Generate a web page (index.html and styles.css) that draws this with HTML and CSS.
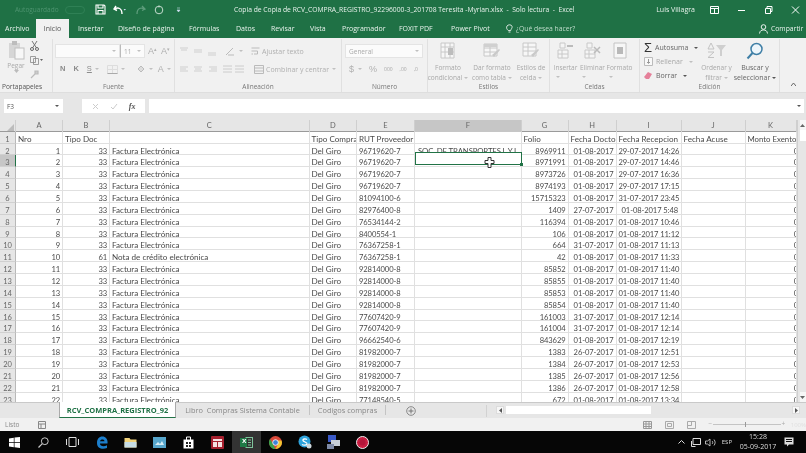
FILE: index.html
```html
<!DOCTYPE html>
<html lang="es">
<head>
<meta charset="utf-8">
<title>Excel</title>
<link rel="stylesheet" href="styles.css">
</head>
<body>
<div class="app">
  <header class="titlebar">
    <div class="qat">
      <span class="autosave">Autoguardado</span>
      <span class="toggle"></span>
      <svg class="qi save" width="11" height="11" viewBox="0 0 11 11"><path d="M1 1h8l1 1v8H1z M3 1v3h5V1 M3 10V6.500h5V10" fill="none" stroke="#fff" stroke-width="1.100"/></svg>
      <svg class="qi undo" width="13" height="10" viewBox="0 0 13 10"><path d="M3 1L1 4l3 1.500M1.500 4C5 2 9 3 9 9" fill="none" stroke="#fff" stroke-width="1.400"/><path d="M10.500 4h2.500l-1.250 1.500z" fill="#cde"/></svg>
      <svg class="qi redo" width="13" height="10" viewBox="0 0 13 10"><path d="M8 1l3 3-3 1.500M10.500 4C7 2 3 3 3 9" fill="none" stroke="#5d9c7b" stroke-width="1.300"/></svg>
      <svg class="qi circ" width="10" height="10" viewBox="0 0 10 10"><circle cx="5" cy="5" r="3.800" fill="none" stroke="#c5dccf" stroke-width="1"/><path d="M5 .5v2" stroke="#c5dccf"/></svg>
      <svg class="qi more" width="5" height="6" viewBox="0 0 5 6"><path d="M1 1h3M1 3h3l-1.500 2z" fill="#cde" stroke="#cde" stroke-width=".6"/></svg>
    </div>
    <div class="doctitle">Copia de Copia de RCV_COMPRA_REGISTRO_92296000-3_201708 Teresita -Myrian.xlsx  -  Solo lectura  -  Excel</div>
    <div class="winbar">
      <span class="user">Luis Villagra</span>
      <svg width="9" height="8" viewBox="0 0 9 8"><path d="M.5 .5h8v7h-8zM.5 2.500h8M4.500 2.500v5" fill="none" stroke="#fff"/></svg>
      <svg width="9" height="8" viewBox="0 0 9 8"><path d="M1 4.500h7" stroke="#fff"/></svg>
      <svg width="9" height="8" viewBox="0 0 9 8"><path d="M1.500 2.500h5v5h-5zM3 2.500V.5h5v5H6.500" fill="none" stroke="#fff"/></svg>
      <svg width="9" height="8" viewBox="0 0 9 8"><path d="M1 .5l7 7M8 .5l-7 7" stroke="#fff"/></svg>
    </div>
  </header>
  <nav class="tabs">
    <span class="tab t-arch">Archivo</span>
    <span class="tab t-act">Inicio</span>
    <span class="tab t-ins">Insertar</span>
    <span class="tab t-dis">Diseño de página</span>
    <span class="tab t-for">Fórmulas</span>
    <span class="tab t-dat">Datos</span>
    <span class="tab t-rev">Revisar</span>
    <span class="tab t-vis">Vista</span>
    <span class="tab t-pro">Programador</span>
    <span class="tab t-fox">FOXIT PDF</span>
    <span class="tab t-pow">Power Pivot</span>
    <span class="tab t-que">
      <svg width="7" height="9" viewBox="0 0 7 9"><path d="M2.300 6.500C.5 5 .2 3.500 1 2S5.500.3 6 2.200 5 5 4.700 6.500zM2.500 8h2" fill="none" stroke="#fff" stroke-width=".8"/></svg>
      ¿Qué desea hacer?
    </span>
    <span class="tab t-com">
      <svg width="9" height="10" viewBox="0 0 9 10"><circle cx="4.500" cy="3" r="2.300" fill="none" stroke="#fff" stroke-width=".9"/><path d="M.5 9.500c.5-3 2-3.500 4-3.500s3.500.5 4 3.500" fill="none" stroke="#fff" stroke-width=".9"/></svg>
      Compartir
    </span>
  </nav>
  <section class="ribbon">
    <div class="grp g-clip">
      <div class="body clip">
        <div class="paste">
          <svg width="17" height="19" viewBox="0 0 17 19"><rect x="1" y="2" width="11" height="15" fill="#d6d6d6"/><rect x="4" y="0" width="5" height="4" fill="#bdbdbd"/><rect x="7" y="7" width="9" height="11" fill="#f7f7f7" stroke="#c0c0c0"/></svg>
          <span>Pegar</span>
          <svg class="drop" width="5" height="3" viewBox="0 0 5 3"><path d="M0 0h5L2.500 3z" fill="#bbb"/></svg>
        </div>
        <div class="clipside">
          <svg width="9" height="10" viewBox="0 0 9 10"><path d="M2 0l4.500 7M7 0L2.500 7" stroke="#777" stroke-width="1"/><circle cx="2" cy="8" r="1.500" fill="none" stroke="#666"/><circle cx="7" cy="8" r="1.500" fill="none" stroke="#666"/></svg>
          <svg width="13" height="9" viewBox="0 0 13 9"><path d="M.5.500h5v6h-5zM3.500 2.500h5v6h-5z" fill="#f2f2f2" stroke="#888" stroke-width=".8"/><path d="M10 3h3l-1.500 2z" fill="#666"/></svg>
          <svg width="9" height="9" viewBox="0 0 9 9"><path d="M1 8l4-4M5 1h3v3H5z" stroke="#bbb" fill="#ccc" stroke-width="1.200"/></svg>
        </div>
      </div>
      <div class="lbl dark">Portapapeles</div>
    </div>
    <div class="grp g-font">
      <div class="body stack">
        <div class="line">
          <span class="box fname"><i class="caret"></i></span>
          <span class="box fsize">11<i class="caret"></i></span>
          <span class="gl big">A<sup>▴</sup></span>
          <span class="gl">A<sup>▾</sup></span>
        </div>
        <div class="line l2">
          <b class="gl">N</b><em class="gl">K</em><u class="gl">S</u><i class="caret"></i>
          <svg class="bord" width="11" height="9" viewBox="0 0 11 9"><path d="M.5.500h10v8H.5zM5.500.5v8M.5 4.500h10" fill="none" stroke="#ddd"/><path d="M.5 8.500h10" stroke="#aaa"/></svg><i class="caret"></i>
          <svg class="pad" width="10" height="9" viewBox="0 0 10 9"><path d="M2 4l3-3 3 3-3 3z" fill="#ddd" stroke="#bbb"/></svg><i class="caret"></i>
          <span class="gl fa">A</span><i class="caret"></i>
        </div>
      </div>
      <div class="lbl">Fuente</div>
    </div>
    <div class="grp g-align">
      <div class="body stack">
        <div class="line">
          <svg width="40" height="9" viewBox="0 0 40 9"><path d="M1 1h8M2 3h6M15 3h8M15 5h8M29 6h8M29 8h8" stroke="#cfcfcf"/></svg>
          <svg class="orient" width="11" height="9" viewBox="0 0 11 9"><path d="M1 8l7-7M3 8h6" stroke="#bbb"/></svg><i class="caret"></i>
          <svg class="wrap" width="9" height="9" viewBox="0 0 9 9"><path d="M.5 1h8M.5 4h6v3H3M.5 7H2" fill="none" stroke="#bbb"/></svg>
          <span class="rt">Ajustar texto</span>
        </div>
        <div class="line l2">
          <svg width="40" height="7" viewBox="0 0 40 7"><path d="M1 1h8M1 3h6M1 5h8M15 1h8M16 3h6M15 5h8M30 1h8M32 3h6M30 5h8" stroke="#cfcfcf"/></svg>
          <svg class="ind" width="24" height="8" viewBox="0 0 24 8"><path d="M1 1h9M1 4h9M1 7h9M13 1h9M13 4h9M13 7h9" stroke="#ccc"/></svg>
          <svg class="wrap" width="10" height="9" viewBox="0 0 10 9"><path d="M.5.500h9v8h-9zM.5 3h9M.5 6h9" fill="none" stroke="#bbb"/></svg>
          <span class="rt">Combinar y centrar</span><i class="caret"></i>
        </div>
      </div>
      <div class="lbl">Alineación</div>
    </div>
    <div class="grp g-num">
      <div class="body stack">
        <div class="line"><span class="box fgen">General<i class="caret"></i></span></div>
        <div class="line l2 numl">
          <span class="gl">$</span><i class="caret"></i><span class="gl">%</span><span class="tiny">000</span><span class="tiny">,00</span><span class="tiny">,0</span>
        </div>
      </div>
      <div class="lbl">Número</div>
    </div>
    <div class="grp g-est">
      <div class="body bigs">
        <div class="bigb w-a">
          <svg width="16" height="17" viewBox="0 0 16 17"><path d="M1 1h13v15H1zM5 1v15M10 1v15M1 5h13M1 10h13" fill="#f7f7f7" stroke="#c8c8c8"/><path d="M8 6h5v7H8z" fill="#bdbdbd"/></svg>
          <span>Formato condicional<i class="caret"></i></span>
        </div>
        <div class="bigb w-b">
          <svg width="18" height="17" viewBox="0 0 18 17"><path d="M1 2h13v12H1zM1 6h13M1 10h13M7 2v12" fill="#f7f7f7" stroke="#c8c8c8"/><path d="M1 2h13v3H1z" fill="#d0d0d0"/><path d="M9 13l7-6 1 1-6 7z" fill="#c9c9c9"/></svg>
          <span>Dar formato como tabla<i class="caret"></i></span>
        </div>
        <div class="bigb w-c">
          <svg width="18" height="17" viewBox="0 0 18 17"><path d="M1 1h13v13H1zM1 5h13M1 9h13M6 1v13" fill="#f7f7f7" stroke="#c8c8c8"/><path d="M9 13l7-6 1 1-6 7z" fill="#c9c9c9"/></svg>
          <span>Estilos de celda<i class="caret"></i></span>
        </div>
      </div>
      <div class="lbl">Estilos</div>
    </div>
    <div class="grp g-cel">
      <div class="body bigs">
        <div class="bigb w-d">
          <svg width="17" height="17" viewBox="0 0 17 17"><path d="M1 8h10v8H1zM5 8v8M1 12h10M3 1h5v5H3z" fill="#f5f5f5" stroke="#c8c8c8"/><path d="M10 4h6" stroke="#bbb" stroke-width="2"/></svg>
          <span>Insertar<i class="caret blk"></i></span>
        </div>
        <div class="bigb w-d">
          <svg width="17" height="17" viewBox="0 0 17 17"><path d="M1 8h10v8H1zM5 8v8M1 12h10M3 1h5v5H3z" fill="#f5f5f5" stroke="#c8c8c8"/><path d="M10 5l6 6M16 5l-6 6" stroke="#bbb" stroke-width="1.500"/></svg>
          <span>Eliminar<i class="caret blk"></i></span>
        </div>
        <div class="bigb w-d">
          <svg width="14" height="17" viewBox="0 0 14 17"><path d="M1 1h12v15H1z" fill="#f7f7f7" stroke="#c4c4c4"/><path d="M4 5h6v7H4z" fill="#b9b9b9"/></svg>
          <span>Formato<i class="caret blk"></i></span>
        </div>
      </div>
      <div class="lbl">Celdas</div>
    </div>
    <div class="grp g-edi">
      <div class="body edi">
        <div class="edicol">
          <div class="eli strong"><span class="sigma">Σ</span>Autosuma<i class="caret dk"></i></div>
          <div class="eli"><svg width="9" height="9" viewBox="0 0 9 9"><path d="M.5.500h8v8h-8z" fill="#f8f8f8" stroke="#bbb"/><path d="M4.500 2v4M3 5l1.500 1.500L6 5" fill="none" stroke="#999"/></svg>Rellenar<i class="caret"></i></div>
          <div class="eli strong"><svg width="9" height="7" viewBox="0 0 9 7"><path d="M0 5l4-5 4 2-3 5H2z" fill="#e5809a"/></svg>Borrar<i class="caret dk"></i></div>
        </div>
        <div class="bigb w-e">
          <svg width="20" height="17" viewBox="0 0 20 17"><path d="M4 1L1 7h6zM1 10h6L1 15.500h6" fill="none" stroke="#c3c3c3"/><path d="M9 3h10l-4 5v6h-2V8z" fill="#cfcfcf"/></svg>
          <span>Ordenar y filtrar<i class="caret"></i></span>
        </div>
        <div class="bigb w-f strong">
          <svg width="18" height="18" viewBox="0 0 18 18"><circle cx="10.500" cy="7" r="5.500" fill="#eef6fb" stroke="#3f7fa6" stroke-width="1.500"/><path d="M6.500 11L1.500 16.500" stroke="#3f7fa6" stroke-width="2"/></svg>
          <span>Buscar y seleccionar<i class="caret dk"></i></span>
        </div>
      </div>
      <div class="lbl">Edición</div>
    </div>
    <div class="collapse"><svg width="5" height="3" viewBox="0 0 5 3"><path d="M0 3l2.500-3L5 3" fill="none" stroke="#666"/></svg></div>
  </section>
  <section class="fbar">
    <div class="namebox">F3<i class="caret dk"></i></div>
    <div class="fbtn">
      <svg width="7" height="7" viewBox="0 0 7 7"><path d="M1 1l5 5M6 1L1 6" stroke="#ccc"/></svg>
      <svg width="8" height="7" viewBox="0 0 8 7"><path d="M1 4l2 2 4-5" fill="none" stroke="#ccc"/></svg>
      <span class="fx">fx</span>
    </div>
    <div class="finput"><i class="caret dk"></i></div>
  </section>
  <section class="sheet">
    <div class="head">
      <span class="corner"><svg width="7" height="7" viewBox="0 0 7 7"><path d="M7 0v7H0z" fill="#bcbcbc"/></svg></span>
      <span>A</span><span>B</span><span>C</span><span>D</span><span>E</span><span class="sel">F</span><span>G</span><span>H</span><span>I</span><span>J</span><span>K</span>
    </div>
    <div class="row first"><span>1</span><span class="tl">Nro</span><span class="tl">Tipo Doc</span><span></span><span>Tipo Compra</span><span>RUT Proveedor</span><span></span><span class="tl">Folio</span><span class="tl">Fecha Docto</span><span class="tl">Fecha Recepcion</span><span class="tl">Fecha Acuse</span><span class="tl">Monto Exento</span></div>
    <div class="row"><span>2</span><span>1</span><span>33</span><span>Factura Electrónica</span><span>Del Giro</span><span>96719620-7</span><span>SOC. DE TRANSPORTES L Y L</span><span>8969911</span><span>01-08-2017</span><span>29-07-2017 14:26</span><span></span><span class="k"><b>0</b></span></div>
    <div class="row cur"><span>3</span><span>2</span><span>33</span><span>Factura Electrónica</span><span>Del Giro</span><span>96719620-7</span><span></span><span>8971991</span><span>01-08-2017</span><span>29-07-2017 14:46</span><span></span><span class="k"><b>0</b></span></div>
    <div class="row"><span>4</span><span>3</span><span>33</span><span>Factura Electrónica</span><span>Del Giro</span><span>96719620-7</span><span></span><span>8973726</span><span>01-08-2017</span><span>29-07-2017 16:36</span><span></span><span class="k"><b>0</b></span></div>
    <div class="row"><span>5</span><span>4</span><span>33</span><span>Factura Electrónica</span><span>Del Giro</span><span>96719620-7</span><span></span><span>8974193</span><span>01-08-2017</span><span>29-07-2017 17:15</span><span></span><span class="k"><b>0</b></span></div>
    <div class="row"><span>6</span><span>5</span><span>33</span><span>Factura Electrónica</span><span>Del Giro</span><span>81094100-6</span><span></span><span>15715323</span><span>01-08-2017</span><span>31-07-2017 23:45</span><span></span><span class="k"><b>0</b></span></div>
    <div class="row"><span>7</span><span>6</span><span>33</span><span>Factura Electrónica</span><span>Del Giro</span><span>82976400-8</span><span></span><span>1409</span><span>27-07-2017</span><span>01-08-2017 5:48</span><span></span><span class="k"><b>0</b></span></div>
    <div class="row"><span>8</span><span>7</span><span>33</span><span>Factura Electrónica</span><span>Del Giro</span><span>76534144-2</span><span></span><span>116394</span><span>01-08-2017</span><span>01-08-2017 10:46</span><span></span><span class="k"><b>0</b></span></div>
    <div class="row"><span>9</span><span>8</span><span>33</span><span>Factura Electrónica</span><span>Del Giro</span><span>8400554-1</span><span></span><span>106</span><span>01-08-2017</span><span>01-08-2017 11:12</span><span></span><span class="k"><b>0</b></span></div>
    <div class="row"><span>10</span><span>9</span><span>33</span><span>Factura Electrónica</span><span>Del Giro</span><span>76367258-1</span><span></span><span>664</span><span>31-07-2017</span><span>01-08-2017 11:13</span><span></span><span class="k"><b>0</b></span></div>
    <div class="row"><span>11</span><span>10</span><span>61</span><span>Nota de crédito electrónica</span><span>Del Giro</span><span>76367258-1</span><span></span><span>42</span><span>01-08-2017</span><span>01-08-2017 11:33</span><span></span><span class="k"><b>0</b></span></div>
    <div class="row"><span>12</span><span>11</span><span>33</span><span>Factura Electrónica</span><span>Del Giro</span><span>92814000-8</span><span></span><span>85852</span><span>01-08-2017</span><span>01-08-2017 11:40</span><span></span><span class="k"><b>0</b></span></div>
    <div class="row"><span>13</span><span>12</span><span>33</span><span>Factura Electrónica</span><span>Del Giro</span><span>92814000-8</span><span></span><span>85855</span><span>01-08-2017</span><span>01-08-2017 11:40</span><span></span><span class="k"><b>0</b></span></div>
    <div class="row"><span>14</span><span>13</span><span>33</span><span>Factura Electrónica</span><span>Del Giro</span><span>92814000-8</span><span></span><span>85853</span><span>01-08-2017</span><span>01-08-2017 11:40</span><span></span><span class="k"><b>0</b></span></div>
    <div class="row"><span>15</span><span>14</span><span>33</span><span>Factura Electrónica</span><span>Del Giro</span><span>92814000-8</span><span></span><span>85854</span><span>01-08-2017</span><span>01-08-2017 11:40</span><span></span><span class="k"><b>0</b></span></div>
    <div class="row"><span>16</span><span>15</span><span>33</span><span>Factura Electrónica</span><span>Del Giro</span><span>77607420-9</span><span></span><span>161003</span><span>31-07-2017</span><span>01-08-2017 12:14</span><span></span><span class="k"><b>0</b></span></div>
    <div class="row"><span>17</span><span>16</span><span>33</span><span>Factura Electrónica</span><span>Del Giro</span><span>77607420-9</span><span></span><span>161004</span><span>31-07-2017</span><span>01-08-2017 12:14</span><span></span><span class="k"><b>0</b></span></div>
    <div class="row"><span>18</span><span>17</span><span>33</span><span>Factura Electrónica</span><span>Del Giro</span><span>96662540-6</span><span></span><span>843629</span><span>01-08-2017</span><span>01-08-2017 12:19</span><span></span><span class="k"><b>0</b></span></div>
    <div class="row"><span>19</span><span>18</span><span>33</span><span>Factura Electrónica</span><span>Del Giro</span><span>81982000-7</span><span></span><span>1383</span><span>26-07-2017</span><span>01-08-2017 12:51</span><span></span><span class="k"><b>0</b></span></div>
    <div class="row"><span>20</span><span>19</span><span>33</span><span>Factura Electrónica</span><span>Del Giro</span><span>81982000-7</span><span></span><span>1384</span><span>26-07-2017</span><span>01-08-2017 12:53</span><span></span><span class="k"><b>0</b></span></div>
    <div class="row"><span>21</span><span>20</span><span>33</span><span>Factura Electrónica</span><span>Del Giro</span><span>81982000-7</span><span></span><span>1385</span><span>26-07-2017</span><span>01-08-2017 12:56</span><span></span><span class="k"><b>0</b></span></div>
    <div class="row"><span>22</span><span>21</span><span>33</span><span>Factura Electrónica</span><span>Del Giro</span><span>81982000-7</span><span></span><span>1386</span><span>26-07-2017</span><span>01-08-2017 12:58</span><span></span><span class="k"><b>0</b></span></div>
    <div class="row"><span>23</span><span>22</span><span>33</span><span>Factura Electrónica</span><span>Del Giro</span><span>77148540-5</span><span></span><span>672</span><span>01-08-2017</span><span>01-08-2017 13:34</span><span></span><span class="k"><b>0</b></span></div>
    <div class="selection"><i class="handle"></i>
      <svg class="pointer" width="11" height="11" viewBox="0 0 11 11"><path d="M4 .5h3v3h3v3H7v4H4v-4H1v-3h3z" fill="#fff" stroke="#333" stroke-width="1"/></svg>
    </div>
    <div class="vscroll">
      <span class="sbtn"><svg width="5" height="3" viewBox="0 0 5 3"><path d="M0 3l2.500-3L5 3z" fill="#666"/></svg></span>
      <span class="sthumb"></span>
      <span class="strack"></span>
      <span class="sbtn"><svg width="5" height="3" viewBox="0 0 5 3"><path d="M0 0l2.500 3L5 0z" fill="#666"/></svg></span>
    </div>
  </section>
  <section class="sheettabs">
    <div class="stnav"><i></i><i></i></div>
    <div class="stab active">RCV_COMPRA_REGISTRO_92</div>
    <div class="stab s2">Libro  Compras Sistema Contable</div>
    <div class="stab s3">Codigos compras</div>
    <svg class="plus" width="10" height="10" viewBox="0 0 10 10"><circle cx="5" cy="5" r="4.300" fill="none" stroke="#888"/><path d="M5 2.500v5M2.500 5h5" stroke="#777"/></svg>
    <div class="hscroll">
      <span class="hbtn"><svg width="3" height="5" viewBox="0 0 3 5"><path d="M3 0L0 2.500 3 5z" fill="#555"/></svg></span>
      <span class="hthumb"></span>
      <span class="htrack"></span>
      <span class="hbtn"><svg width="3" height="5" viewBox="0 0 3 5"><path d="M0 0l3 2.500L0 5z" fill="#555"/></svg></span>
    </div>
  </section>
  <footer class="status">
    <span class="listo">Listo</span>
    <svg class="macro" width="8" height="8" viewBox="0 0 8 8"><path d="M.5.500h7v7h-7zM.5 3h7M3 3v4.500" fill="none" stroke="#888"/></svg>
    <div class="views">
      <svg width="9" height="8" viewBox="0 0 9 8"><path d="M.5.500h8v7h-8zM.5 3h8M.5 5.500h8M3 .5v7M6 .5v7" fill="none" stroke="#999"/></svg>
      <svg width="9" height="8" viewBox="0 0 9 8"><path d="M.5.500h8v7h-8zM2.500 2.500h4v3h-4z" fill="none" stroke="#aaa"/></svg>
      <svg width="9" height="8" viewBox="0 0 9 8"><path d="M.5.500h8v7h-8zM4.500.5v4h-4" fill="none" stroke="#aaa"/></svg>
    </div>
    <div class="zoomer"><i class="zm">−</i><span class="ztrack"><i class="zthumb"></i></span><i class="zm">+</i></div>
    <span class="zpct">100%</span>
  </footer>
  <footer class="taskbar">
    <div class="tasks">
      <svg width="11" height="11" viewBox="0 0 11 11"><path d="M0 1.500l4.800-.8v4.300H0zM5.500.6L11 0v5H5.500zM0 5.800h4.800v4.400L0 9.500zM5.500 5.800H11V11l-5.500-.8z" fill="#fff"/></svg>
      <svg width="11" height="11" viewBox="0 0 11 11"><circle cx="6.800" cy="4.200" r="3.400" fill="none" stroke="#ccc"/><path d="M4.300 6.700L.5 10.500" stroke="#ccc" stroke-width="1.200"/></svg>
      <svg width="13" height="10" viewBox="0 0 13 10"><path d="M3 .5h7v9H3zM.5 2v6M12.500 2v6" fill="none" stroke="#ddd"/></svg>
      <svg width="12" height="13" viewBox="0 0 12 13"><path d="M1 7C1 3 3 .5 6.500.5S12 3.500 11.500 7.500H4c0 3 4 3.500 7 1.800V12c-4 1.500-10 1-10-5zM4 5.200h4.500C8.500 3.200 4.500 3 4 5.200z" fill="#1d7fcc"/></svg>
      <svg width="13" height="11" viewBox="0 0 13 11"><path d="M.5 1h5l1 1.500h6V10.500H.5z" fill="#f2d47c"/><path d="M.5 5h12v5.500H.5z" fill="#c7dde6"/></svg>
      <svg width="13" height="11" viewBox="0 0 13 11"><rect width="13" height="11" fill="#57a6cc"/><path d="M2 8l3-3 2 2 2-3 2 4z" fill="#d6edf6"/></svg>
      <svg width="11" height="13" viewBox="0 0 11 13"><path d="M.5 3.500h10v9H.5z" fill="#fff"/><path d="M3.500 4V1h4v3" fill="none" stroke="#fff"/><path d="M3 6h2v2H3zM6 6h2v2H6zM3 9h2v2H3zM6 9h2v2H6z" fill="#222"/></svg>
      <svg width="13" height="13" viewBox="0 0 13 13"><rect width="13" height="13" rx="1" fill="#a5202e"/><path d="M2 3h9v2H2zM2 6h4v5H2zM7 6h4v5H7z" fill="#f5e2e2"/></svg>
      <span class="tbx"><svg width="13" height="11" viewBox="0 0 13 11"><rect x="6" y=".5" width="6.500" height="10" fill="none" stroke="#7fc39b"/><path d="M8 3h3M8 5.500h3M8 8h3" stroke="#7fc39b"/><rect y="1" width="7" height="9" fill="#1e7a46"/></svg><b class="xl">x</b></span>
      <svg width="13" height="13" viewBox="0 0 13 13"><circle cx="6.500" cy="6.500" r="6.500" fill="#d9493a"/><path d="M6.500 13A6.500 6.500 0 0 1 1 3l3 5z" fill="#3b9f4b"/><path d="M13 6.500A6.500 6.500 0 0 1 6.500 13L9 8l-.5-3.500h4z" fill="#f2c531"/><circle cx="6.500" cy="6.500" r="2.800" fill="#3c82d8" stroke="#fff" stroke-width=".8"/></svg>
      <svg width="14" height="14" viewBox="0 0 14 14"><circle cx="6.500" cy="6.500" r="6" fill="#2ea3dc"/><path d="M9 4.500C7.500 3.500 4.500 3.800 5 5.500S9.500 7 9 9c-.5 1.500-3.500 1.500-5 .5" fill="none" stroke="#fff" stroke-width="1.300"/><circle cx="11" cy="11" r="2.500" fill="#cfd8dc"/></svg>
      <svg width="13" height="14" viewBox="0 0 13 14"><rect x="1" y="0" width="8" height="7" fill="#3a59c7"/><rect x="4" y="5" width="9" height="6" fill="#c7cfd8"/><rect x="0" y="9" width="7" height="5" fill="#7e8aa6"/></svg>
      <svg width="13" height="13" viewBox="0 0 13 13"><circle cx="6.500" cy="6.500" r="6" fill="#c91f43" stroke="#eee" stroke-width="1"/><circle cx="6.500" cy="6.500" r="3" fill="#b3163a"/></svg>
    </div>
    <div class="tray">
      <svg width="7" height="4" viewBox="0 0 7 4"><path d="M.5 3.500l3-3 3 3" fill="none" stroke="#ddd"/></svg>
      <svg width="10" height="9" viewBox="0 0 10 9"><path d="M2 .5h7.500v6H2zM.5 3v5.500h4" fill="none" stroke="#ddd"/></svg>
      <svg class="vol" width="11" height="9" viewBox="0 0 11 9"><path d="M.5 3h2L5 1v7L2.500 6h-2zM7 3c1 1 1 2 0 3M9 1.500c1.500 2 1.500 4 0 6" fill="none" stroke="#ddd" stroke-width=".8"/></svg>
      <span class="esp">ESP</span>
      <span class="clock"><span>15:28</span><span>05-09-2017</span></span>
      <svg width="10" height="10" viewBox="0 0 10 10"><path d="M.5.500h9v7H5L3 9.500v-2H.5z" fill="#ddd"/><path d="M2 2.500h6M2 4.500h6" stroke="#111"/></svg>
    </div>
  </footer>
</div>
</body>
</html>
```

FILE: styles.css
```css
* { box-sizing: border-box; }
html, body { margin: 0; padding: 0; background: #000; }
.app {
  width: 806px; height: 453px; overflow: hidden; display: flex; flex-direction: column;
  font-family: "Open Sans", sans-serif; background: #fff; filter: blur(.45px);
}
i, em { font-style: normal; }
svg { display: block; flex: none; }

.caret { display: inline-block; width: 0; height: 0; border: 2px solid transparent; border-top: 2.500px solid #c0c0c0; border-bottom: 0; margin-left: 3px; vertical-align: middle; flex: none; }
.caret.dk { border-top-color: #555; }
.caret.blk { display: block; margin: 3px auto 0; }

/* title bar */
.titlebar { height: 19px; flex: none; background: #1f7145; color: #e8f2ec; display: flex; align-items: center; font-size: 7px; position: relative; }
.qat { display: flex; align-items: center; width: 234px; flex: none; }
.autosave { margin-left: 15px; width: 45px; color: #4e9470; font-size: 6.500px; white-space: nowrap; }
.toggle { width: 20px; height: 8px; border: 1px solid #2f8055; border-radius: 4px; margin-left: 5px; }
.qi.save { margin-left: 10px; }
.qi.undo { margin-left: 7px; }
.qi.redo { margin-left: 8px; }
.qi.circ { margin-left: 7px; }
.qi.more { margin-left: 12px; }
.doctitle { width: 400px; flex: none; white-space: pre; font-size: 6.750px; }
.winbar { flex: 1; display: flex; align-items: center; justify-content: flex-end; padding-right: 6px; }
.user { margin-right: 15px; white-space: nowrap; }
.winbar svg { margin-right: 18px; }
.winbar svg:last-child { margin-right: 0; }

/* ribbon tabs */
.tabs { height: 19px; flex: none; background: #1f7145; color: #e8f2ec; display: flex; align-items: center; font-size: 7px; padding-left: 5px; position: relative; }
.tab { white-space: nowrap; display: flex; align-items: center; }
.t-arch { width: 31px; }
.t-act { width: 33px; height: 19px; align-self: flex-end; background: #f1f1f1; color: #555; justify-content: center; margin-right: 9px; }
.t-ins { width: 40px; }
.t-dis { width: 71px; }
.t-for { width: 47px; }
.t-dat { width: 35px; }
.t-rev { width: 39px; }
.t-vis { width: 32px; }
.t-pro { width: 57px; }
.t-fox { width: 52px; }
.t-pow { width: 52px; }
.t-que { width: 253px; gap: 3px; color: #bfdccb; font-size: 6.800px; margin-left: 3px; }
.t-com { gap: 3px; font-size: 6.800px; }

/* ribbon */
.ribbon { height: 55px; flex: none; background: #f1f1f1; display: flex; color: #a8a8a8; font-size: 6.500px; border-bottom: 1px solid #dedede; }
.grp { display: flex; flex-direction: column; border-right: 1px solid #e0e0e0; flex: none; margin: 1px 0 0; }
.g-clip { width: 53px; } .g-font { width: 122px; } .g-align { width: 167px; } .g-num { width: 86px; }
.g-est { width: 122px; } .g-cel { width: 90px; } .g-edi { width: 140px; }
.body { flex: 1; min-height: 0; }
.lbl { height: 11px; line-height: 11px; text-align: center; color: #777; font-size: 6.500px; white-space: nowrap; }
.lbl.dark { color: #555; text-align: left; padding-left: 2px; }
.clip { display: flex; padding: 2px 0 0 7px; }
.paste { width: 18px; display: flex; flex-direction: column; align-items: center; color: #aaa; }
.paste span { margin-top: 2px; line-height: 8px; }
.clipside { display: flex; flex-direction: column; align-items: flex-start; gap: 5px; margin-left: 5px; }
.stack { display: flex; flex-direction: column; padding-top: 5px; padding-left: 2px; }
.line { display: flex; align-items: center; height: 14px; white-space: nowrap; }
.line.l2 { margin-top: 4px; }
.box { background: #fbfbfb; border: 1px solid #e4e4e4; height: 14px; display: flex; align-items: center; justify-content: flex-end; padding: 0 3px; }
.fname { width: 65px; }
.fsize { width: 25px; justify-content: space-between; border-left-color: #bbb; color: #aaa; }
.fgen { width: 78px; justify-content: space-between; color: #aaa; margin-left: 1px; }
.gl { font-size: 9px; color: #b0b0b0; margin-left: 4px; line-height: 1; font-family: "Liberation Sans", sans-serif; }
.gl sup { font-size: 5px; vertical-align: top; }
.gl.big { margin-left: 3px; }
b.gl, em.gl, u.gl { font-size: 7.500px; color: #8c8c8c; margin-left: 8px; }
b.gl { margin-left: 5px; }
em.gl { font-weight: 700; }
.bord { margin-left: 8px; } .pad { margin-left: 11px; } .gl.fa { margin-left: 5px; }
.g-align .stack { padding-left: 4px; }
.orient { margin-left: 6px; }
.wrap { margin-left: 8px; margin-right: 2px; }
.rt { color: #b0b0b0; font-size: 7px; }
.ind { margin-left: 3px; }
.numl { padding-left: 5px; gap: 1px; }
.numl .gl { margin-left: 0; }
.numl .caret { margin: 0 6px 0 3px; }
.tiny { font-size: 5px; margin-left: 6px; }
.bigs { display: flex; padding: 3px 0 0 0; }
.bigb { display: flex; flex-direction: column; align-items: center; text-align: center; line-height: 10px; flex: none; }
.bigb span { margin-top: 4px; }
.bigb .caret { margin-left: 2px; }
.w-a { width: 44px; margin-left: -2px; } .w-b { width: 44px; } .w-c { width: 34px; }
.w-d { width: 27px; }
.g-cel .bigs { padding-left: 2px; }
.edi { display: flex; padding: 3px 0 0 4px; }
.edicol { width: 57px; flex: none; display: flex; flex-direction: column; gap: 3px; font-size: 7px; }
.eli { display: flex; align-items: center; gap: 3px; height: 11px; white-space: nowrap; }
.strong { color: #666; }
.sigma { font-size: 13px; color: #333; font-family: "Liberation Sans", sans-serif; line-height: 1; }
.w-e { width: 31px; }
.w-f { width: 46px; font-size: 7px; }
.w-f span { margin-top: 3px; }
.collapse { flex: 1; display: flex; align-items: flex-end; justify-content: center; padding-bottom: 6px; }

/* formula bar */
.fbar { height: 27px; flex: none; background: #e6e6e6; display: flex; padding: 6px 2px 7px 4px; }
.namebox { width: 59px; background: #fff; color: #555; font-size: 6.500px; display: flex; align-items: center; justify-content: space-between; padding: 0 4px 0 3px; flex: none; }
.fbtn { width: 63px; background: #fff; margin-left: 19px; display: flex; align-items: center; justify-content: space-around; padding: 0 4px; flex: none; }
.fx { font: italic 700 8px "Liberation Serif", serif; color: #555; }
.finput { flex: 1; background: #fff; margin-left: 4px; display: flex; align-items: center; justify-content: flex-end; padding-right: 3px; }

/* grid */
.sheet { height: 282px; flex: none; position: relative; overflow: hidden; font-family: Lato, sans-serif; font-size: 8.100px; color: #4a4a4a; }
.head, .row { display: grid; grid-template-columns: 16px 47px 47px 199.500px 47.500px 58px 106.500px 47px 48px 65px 64px 51px; }
.head { height: 11.700px; background: #e6e6e6; border-bottom: 1px solid #9a9a9a; color: #666; font-size: 7.500px; }
.head span { text-align: center; line-height: 11.500px; border-right: 1px solid #cfcfcf; }
.head .sel { background: #c6c6c6; }
.corner { display: flex; align-items: flex-end; justify-content: flex-end; padding: 0 1px 1px 0; }
.row { height: 11.860px; }
.row span { line-height: 11px; padding: 2px 1px 0 2px; border-right: 1px solid #e0e0e0; border-bottom: 1px solid #e0e0e0; overflow: hidden; white-space: nowrap; height: 11.860px; }
.row span:nth-child(1) { background: #e6e6e6; color: #666; text-align: center; border-right-color: #b8b8b8; border-bottom-color: #d0d0d0; padding: 2px 0 0; font-size: 7.500px; }
.row span:nth-child(2), .row span:nth-child(3), .row span:nth-child(6), .row span:nth-child(8), .row span:nth-child(9), .row span:nth-child(10) { font-size: 7.600px; letter-spacing: -.1px; }
.row span:nth-child(2), .row span:nth-child(3), .row span:nth-child(8), .row span:nth-child(9) { text-align: right; padding-right: 2px; }
.row span:nth-child(10) { text-align: right; padding-right: 2.500px; }
.row span:nth-child(4) { padding-left: 2px; }
.row span:nth-child(7) { font-size: 7.800px; letter-spacing: -.15px; padding-left: 3px; }
.row.first span { font-size: 8.100px; letter-spacing: 0; }
.row.first span:nth-child(1) { font-size: 7.500px; }
.row.first span:last-child { font-size: 7.800px; }
.row span.tl { text-align: left; }
.row.cur span:nth-child(1) { background: #c6c6c6; border-right: 1px solid #1f7145; }
.k { display: flex; justify-content: flex-end; padding-right: 0 !important; }
.k b { font-weight: 400; margin-right: -3px; }
.selection { position: absolute; left: 415px; top: 32.400px; width: 106.500px; height: 13px; background: #fff; border: 1px solid #217346; }
.handle { position: absolute; right: -2px; bottom: -2px; width: 3px; height: 3px; background: #217346; }
.pointer { position: absolute; left: 68px; top: 4px; }
.vscroll { position: absolute; right: 0; top: 0; bottom: 0; width: 9.500px; background: #e6e6e6; border-left: 1px solid #cfcfcf; display: flex; flex-direction: column; padding-left: 2px; }
.sbtn { height: 10px; background: #f7f7f7; display: flex; align-items: center; justify-content: center; flex: none; }
.sthumb { height: 11px; background: #fff; flex: none; }
.strack { flex: 1; }

/* sheet tabs */
.sheettabs { height: 16px; flex: none; background: #e6e6e6; display: flex; align-items: stretch; border-top: 1px solid #c9c9c9; font-size: 7.400px; color: #888; font-family: "Open Sans", sans-serif; }
.stnav { width: 59px; flex: none; }
.stab { display: flex; align-items: center; justify-content: center; white-space: pre; flex: none; }
.stab.active { width: 117px; background: #fff; color: #1f7145; font-weight: 700; border-bottom: 1.500px solid #217346; border-left: 1px solid #aaa; border-right: 1px solid #aaa; margin-top: -1px; font-size: 7.500px; }
.s2 { width: 134px; border-right: 1px solid #c4c4c4; margin: 2px 0 3px; }
.s3 { width: 76px; border-right: 1px solid #c4c4c4; margin: 2px 0 3px; }
.plus { margin: 3px 0 0 20px; }
.hscroll { width: 314px; margin: 2px 0 1px 70px; padding: 1px 0 3px 9px; display: flex; align-items: stretch; border-left: 1px solid #d2d2d2; flex: none; }
.hbtn { width: 8px; background: #f7f7f7; display: flex; align-items: center; justify-content: center; flex: none; border: 1px solid #dcdcdc; }
.hthumb { width: 145px; background: #fff; margin-left: 2px; flex: none; }
.htrack { flex: 1; }

/* status */
.status { height: 13px; flex: none; background: #f1f1f1; display: flex; align-items: center; font-size: 6.500px; color: #888; }
.listo { margin-left: 5px; width: 41px; }
.views { margin-left: 597px; display: flex; gap: 13px; }
.zoomer { display: flex; align-items: center; margin-left: 12px; width: 78px; color: #aaa; flex: none; }
.zm { width: 5px; text-align: center; line-height: 1; }
.ztrack { flex: 1; height: 1px; background: #c4c4c4; position: relative; }
.zthumb { position: absolute; left: 32px; top: -2px; width: 1px; height: 5px; background: #999; }
.zpct { margin-left: 5px; color: #e0e0e0; font-size: 6px; }

/* taskbar */
.taskbar { height: 22px; flex: none; background: #060606; display: flex; align-items: center; color: #ddd; }
.tasks { display: grid; grid-template-columns: repeat(13, 29px); justify-items: center; align-items: center; flex: none; height: 22px; }
.tbx { width: 29px; height: 22px; background: #333; display: flex; align-items: center; justify-content: center; position: relative; }
.xl { position: absolute; left: 10px; top: 5px; color: #fff; font: 700 8px "Liberation Sans", sans-serif; }
.tray { margin-left: auto; display: flex; align-items: center; gap: 6px; padding-right: 12px; }
.vol { margin-left: -2px; }
.esp { font-size: 6px; }
.clock { display: flex; flex-direction: column; align-items: center; font-size: 7px; line-height: 10.500px; width: 40px; }
```
